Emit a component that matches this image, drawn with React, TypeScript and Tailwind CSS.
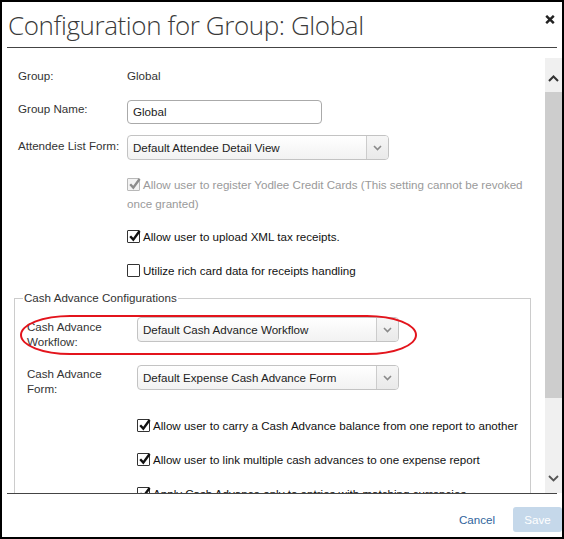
import React from "react";

const Check = ({ checked, disabled }: { checked?: boolean; disabled?: boolean }) => (
  <span
    className={
      disabled
        ? "relative inline-block w-[13px] h-[13px] shrink-0 border border-[#b8b8b8] bg-[#f3f3f3] rounded-[1px]"
        : "relative inline-block w-[13px] h-[13px] shrink-0 border border-[#333] bg-white rounded-[1px]"
    }
  >
    {checked && (
      <svg className="absolute left-[0px] top-[-2px]" width="14" height="14" viewBox="0 0 14 14">
        <path
          d="M2.2 7.2 L5.3 10.6 L11.6 2"
          fill="none"
          stroke={disabled ? "#8c8c8c" : "#111"}
          strokeWidth="2.4"
        />
      </svg>
    )}
  </span>
);

const CheckRow = ({ text, checked, disabled, className }: { text: string; checked?: boolean; disabled?: boolean; className: string }) => (
  <div className={"flex items-start leading-[19px] whitespace-nowrap " + className}>
    <span className="mt-[3px] flex">
      <Check checked={checked} disabled={disabled} />
    </span>
    <span className={disabled ? "ml-[3px] text-[#9a9a9a]" : "ml-[3px] text-[#111]"}>{text}</span>
  </div>
);

const Select = ({ text }: { text: string }) => (
  <div className="flex w-[262px] h-[25px] border border-[#c3c3c3] rounded-[4px] bg-linear-to-b from-white to-[#f2f2f2] overflow-hidden shrink-0">
    <div className="flex-1 pl-[5px] flex items-center text-[#222]">{text}</div>
    <div className="w-[22px] border-l border-[#cccccc] bg-linear-to-b from-[#f6f6f6] to-[#e9e9e9] flex items-center justify-center">
      <svg width="9" height="6" viewBox="0 0 9 6">
        <path d="M1 1 L4.5 4.5 L8 1" fill="none" stroke="#8a8a8a" strokeWidth="1.6" />
      </svg>
    </div>
  </div>
);

export default function App() {
  return (
    <div className="relative w-[564px] h-[539px] border-2 border-black bg-white flex flex-col overflow-hidden font-['Liberation_Sans',Arial,sans-serif] text-[11.6px] text-[#333]">
      {/* Header */}
      <div className="mx-[5px] h-[46px] border-b border-[#444] flex items-start justify-between shrink-0">
        <div className="pl-[1px] pt-[10px] text-[26px] leading-[26px] tracking-[-0.4px] font-light text-[#3a3a3a] font-['Open_Sans',sans-serif]">
          Configuration for Group: Global
        </div>
        <div className="pt-[13px] pr-[2px]">
          <svg width="10" height="9" viewBox="0 0 10 9">
            <path d="M1.2 0.8 L8.8 8.2 M8.8 0.8 L1.2 8.2" stroke="#222" strokeWidth="2.4" />
          </svg>
        </div>
      </div>

      {/* Body */}
      <div className="flex h-[445px] shrink-0 overflow-hidden">
        <div className="flex-1 overflow-hidden pt-[20px]">
          <div className="ml-[16px] flex leading-[16px]">
            <div className="w-[109px]">Group:</div>
            <div>Global</div>
          </div>

          <div className="ml-[16px] mt-[16px] flex leading-[16px]">
            <div className="w-[109px] pt-[1px]">Group Name:</div>
            <div className="w-[195px] h-[24px] border border-[#aaaaaa] rounded-[4px] pl-[5px] flex items-center text-[#222]">
              Global
            </div>
          </div>

          <div className="ml-[16px] mt-[11px] flex leading-[16px]">
            <div className="w-[109px] pt-[3px]">Attendee List Form:</div>
            <Select text="Default Attendee Detail View" />
          </div>

          <div className="ml-[125px] mt-[15px]">
            <CheckRow
              className=""
              checked
              disabled
              text="Allow user to register Yodlee Credit Cards (This setting cannot be revoked"
            />
            <div className="leading-[19px] text-[#9a9a9a]">once granted)</div>
          </div>

          <CheckRow className="ml-[125px] mt-[14px]" checked text="Allow user to upload XML tax receipts." />
          <CheckRow className="ml-[125px] mt-[15px]" text="Utilize rich card data for receipts handling" />

          <fieldset className="ml-[12px] mr-[14px] mt-[10px] border border-[#cccccc] pl-[12px] pb-[40px]">
            <legend className="ml-[-4px] px-[1px] leading-[16px] text-[#333]">Cash Advance Configurations</legend>

            <div className="mt-[11px] flex">
              <div className="w-[110px] pt-[2px] leading-[15px]">
                Cash Advance
                <br />
                Workflow:
              </div>
              <Select text="Default Cash Advance Workflow" />
            </div>

            <div className="mt-[16px] flex">
              <div className="w-[110px] pt-[1px] leading-[15px]">
                Cash Advance
                <br />
                Form:
              </div>
              <Select text="Default Expense Cash Advance Form" />
            </div>

            <CheckRow
              className="ml-[110px] mt-[20px]"
              checked
              text="Allow user to carry a Cash Advance balance from one report to another"
            />
            <CheckRow
              className="ml-[110px] mt-[15px]"
              checked
              text="Allow user to link multiple cash advances to one expense report"
            />
            <CheckRow
              className="ml-[110px] mt-[15px]"
              checked
              text="Apply Cash Advance only to entries with matching currencies"
            />
          </fieldset>
        </div>

        {/* Scrollbar */}
        <div className="w-[17px] mt-[10px] bg-[#f0f0f0] flex flex-col shrink-0">
          <div className="h-[34px] flex justify-center pt-[17px]">
            <svg width="11" height="7" viewBox="0 0 11 7">
              <path d="M1 6 L5.5 1.5 L10 6" fill="none" stroke="#333" strokeWidth="2" />
            </svg>
          </div>
          <div className="h-[306px] bg-[#cdcdcd]" />
          <div className="flex-1 flex justify-center pt-[77px]">
            <svg width="11" height="7" viewBox="0 0 11 7">
              <path d="M1 1 L5.5 5.5 L10 1" fill="none" stroke="#555" strokeWidth="1.8" />
            </svg>
          </div>
        </div>
      </div>

      {/* Footer */}
      <div className="shrink-0">
        <div className="mx-[5px] h-px bg-[#444]" />
        <div className="h-[43px] flex justify-end items-start pt-[13px]">
          <div className="h-[25px] flex items-center text-[#30649c] mr-[18px]">Cancel</div>
          <div className="w-[49px] h-[25px] rounded-[3px] bg-[#c5d8ea] text-white flex items-center justify-center">
            Save
          </div>
        </div>
      </div>

      {/* Annotation */}
      <div className="absolute left-[18px] top-[313px] w-[397px] h-[40px] border-2 border-[#e3141c] rounded-[50px/20px] pointer-events-none" />
    </div>
  );
}
